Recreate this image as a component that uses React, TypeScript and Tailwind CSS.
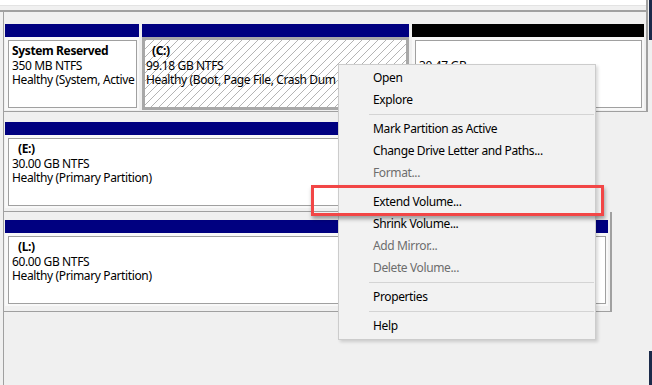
import React from "react";

type PartProps = {
  width: string;
  bar: string;
  selected?: boolean;
  children?: React.ReactNode;
};

function Part({ width, bar, selected, children }: PartProps) {
  return (
    <div className={`flex flex-col shrink-0 ${width}`}>
      <div className={`h-[13px] ${bar}`} />
      {selected ? (
        <div className="h-[73px] border-[3px] border-[#a8a8a8] bg-[repeating-linear-gradient(135deg,#b4b4b4_0px,#b4b4b4_1px,#ffffff_1px,#ffffff_5.66px)] px-[1px] pt-[4px] leading-[14.5px] whitespace-nowrap overflow-hidden">
          {children}
        </div>
      ) : (
        <div className="h-[73px] bg-[#f8f8f8] pt-[3px] pl-[3px] pr-[2px] pb-[2px] flex">
          <div className="flex-1 border border-[#a0a0a0] bg-white pl-[3px] pt-[3px] leading-[14.5px] whitespace-nowrap overflow-hidden">
            {children}
          </div>
        </div>
      )}
    </div>
  );
}

function Item({ children, disabled }: { children: React.ReactNode; disabled?: boolean }) {
  return (
    <div className={`h-[22px] flex items-center pl-[34px] ${disabled ? "text-[#6d6d6d]" : "text-black"}`}>
      {children}
    </div>
  );
}

function Sep() {
  return (
    <div className="h-[7px] flex items-center pl-[30px] pr-[1px]">
      <div className="h-px w-full bg-[#d4d4d4]" />
    </div>
  );
}

export default function App() {
  return (
    <div className="relative w-[652px] h-[385px] overflow-hidden bg-[#f0f0f0] font-['Segoe_UI','Noto_Sans',sans-serif] text-[12px] tracking-[-0.37px] text-black">
      {/* bottom of upper pane */}
      <div className="w-[648px] h-[5px] bg-white border-r-2 border-[#a0a0a0]" />
      <div className="w-[648px] h-px bg-[#e3e3e3] border-r-2 border-[#a0a0a0]" />
      <div className="w-[648px] h-[4px] border-r-2 border-[#a0a0a0]" />
      <div className="w-[648px] h-[2px] bg-[#a0a0a0]" />

      {/* disks */}
      <div className="pl-[3px] flex flex-col">
        {/* row 1 */}
        <div className="w-[645px] h-[100px] border-l border-r-2 border-b border-[#a0a0a0] pt-[12px] pl-[1px] flex gap-[3px]">
          <Part width="w-[134px]" bar="bg-[#000080]">
            <div className="font-bold">System Reserved</div>
            <div>350 MB NTFS</div>
            <div>Healthy (System, Active</div>
          </Part>
          <Part width="w-[267px]" bar="bg-[#000080]" selected>
            <div className="font-bold pl-[6px]">(C:)</div>
            <div>99.18 GB NTFS</div>
            <div>Healthy (Boot, Page File, Crash Dum</div>
          </Part>
          <Part width="w-[232px]" bar="bg-black">
            <div>&nbsp;</div>
            <div>30.47 GB</div>
          </Part>
        </div>
        {/* row 2 */}
        <div className="w-[590px] h-[100px] border-l border-b border-[#a0a0a0] pt-[10px] pl-[1px] flex">
          <Part width="w-[585px]" bar="bg-[#000080]">
            <div className="font-bold pl-[6px]">(E:)</div>
            <div>30.00 GB NTFS</div>
            <div>Healthy (Primary Partition)</div>
          </Part>
        </div>
        {/* row 3 */}
        <div className="w-[609px] h-[100px] border-l border-r-2 border-b border-[#a0a0a0] pt-[8px] pl-[1px] flex">
          <Part width="w-[603px]" bar="bg-[#000080]">
            <div className="font-bold pl-[6px]">(L:)</div>
            <div>60.00 GB NTFS</div>
            <div>Healthy (Primary Partition)</div>
          </Part>
        </div>
        <div className="h-[80px] border-l border-[#a0a0a0]" />
      </div>

      {/* window edge */}
      <div className="absolute right-0 top-0 w-[3px] h-[40px] bg-[#1b2a4a]" />
      <div className="absolute right-0 bottom-0 w-[3px] h-[34px] bg-[#1b2a4a]" />

      {/* context menu */}
      <div className="absolute left-[338px] top-[64px] w-[258px] h-[276px] bg-[#f2f2f2] border border-[#cccccc] pt-[2px] shadow-[2px_2px_3px_rgba(0,0,0,0.15)]">
        <Item>Open</Item>
        <Item>Explore</Item>
        <Sep />
        <Item>Mark Partition as Active</Item>
        <Item>Change Drive Letter and Paths...</Item>
        <Item disabled>Format...</Item>
        <Sep />
        <Item>Extend Volume...</Item>
        <Item>Shrink Volume...</Item>
        <Item disabled>Add Mirror...</Item>
        <Item disabled>Delete Volume...</Item>
        <Sep />
        <Item>Properties</Item>
        <Sep />
        <Item>Help</Item>
      </div>

      {/* highlight */}
      <div className="absolute left-[311px] top-[185px] w-[293px] h-[31px] border-[3px] border-[#f24646] shadow-[1px_3px_4px_rgba(0,0,0,0.35)]" />
    </div>
  );
}
